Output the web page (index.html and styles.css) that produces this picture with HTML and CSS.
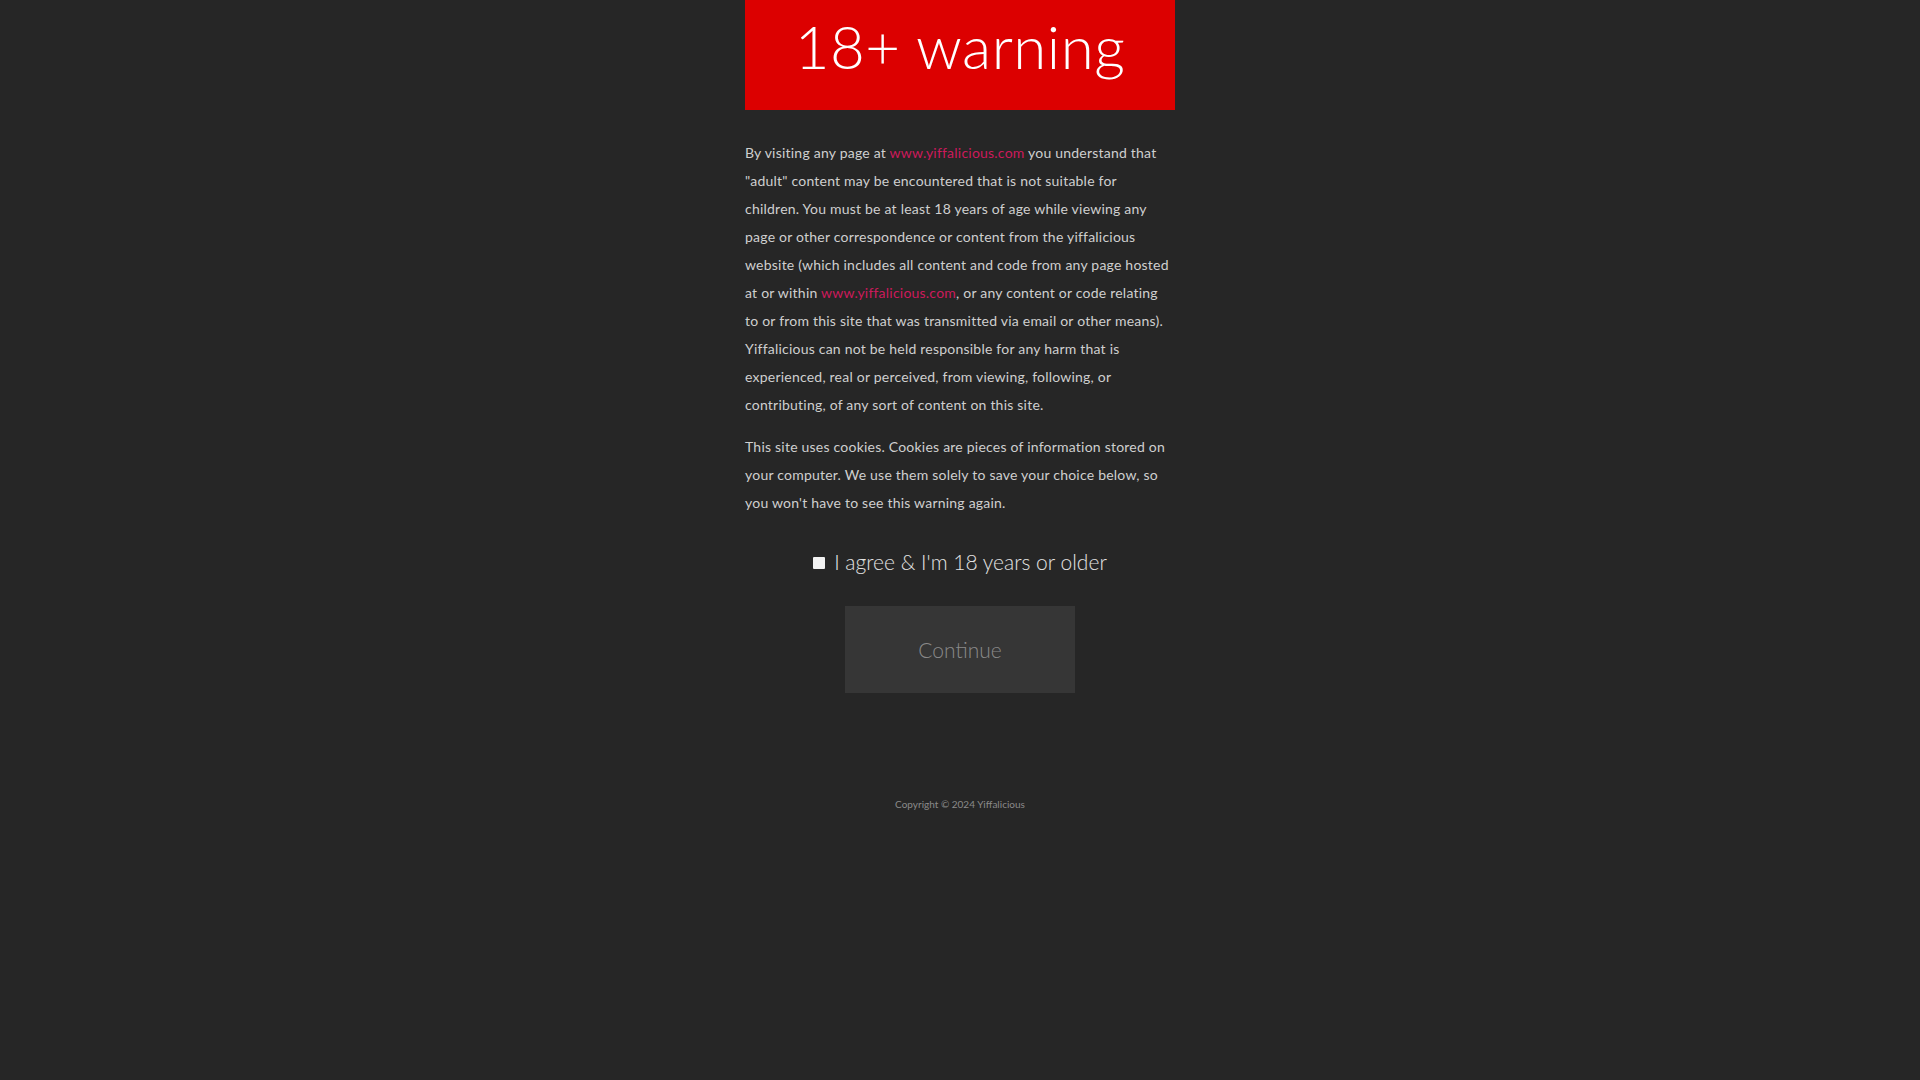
FILE: index.html
```html
<!DOCTYPE html>
<html lang="en">
<head>
  <meta charset="UTF-8">
  <meta name="viewport" content="width=device-width, initial-scale=1.0">
  <title>18+ warning</title>
  <link rel="stylesheet" href="styles.css">
</head>
<body>
  <div class="wrap">
    <div class="header">
      <h1>18+ warning</h1>
    </div>

    <div class="content">
      <p>By visiting any page at <a href="#">www.yiffalicious.com</a> you understand that "adult" content may be encountered that is not suitable for children. You must be at least 18 years of age while viewing any page or other correspondence or content from the yiffalicious website (which includes all content and code from any page hosted at or within <a href="#">www.yiffalicious.com</a>, or any content or code relating to or from this site that was transmitted via email or other means). Yiffalicious can not be held responsible for any harm that is experienced, real or perceived, from viewing, following, or contributing, of any sort of content on this site.</p>
      <p>This site uses cookies. Cookies are pieces of information stored on your computer. We use them solely to save your choice below, so you won't have to see this warning again.</p>
    </div>

    <div class="agree">
      <input type="checkbox" id="agree">
      <label for="agree">I agree &amp; I'm 18 years or older</label>
    </div>

    <div class="buttons">
      <button class="btn" id="continueBtn" disabled>Continue</button>
    </div>

    <div class="copyright">Copyright © 2024 Yiffalicious</div>
  </div>
</body>
</html>
```

FILE: styles.css
```css
* {
  box-sizing: border-box;
  margin: 0;
  padding: 0;
}

body {
  background: #262626;
  font-family: 'Lato', 'Open Sans', sans-serif;
  color: #cfcfcf;
}

.wrap {
  width: 430px;
  margin: 0 auto;
}

.header {
  background: #dc0000;
  height: 110px;
  display: flex;
  align-items: center;
  justify-content: center;
  padding-bottom: 18px;
}

.header h1 {
  font-size: 60px;
  font-weight: 300;
  color: white;
  letter-spacing: 0.5px;
}

.content {
  padding-top: 29px;
  padding-right: 2px;
}

.content p {
  font-size: 14px;
  line-height: 28px;
  letter-spacing: 0.22px;
  margin-bottom: 14px;
}

.content a {
  color: #cc1a5c;
  text-decoration: none;
}

.agree {
  display: flex;
  align-items: center;
  justify-content: center;
  gap: 9px;
  margin-top: 29px;
  height: 30px;
}

.agree input[type="checkbox"] {
  appearance: none;
  width: 12px;
  height: 12px;
  margin-top: 3px;
  background: #f2f2f2;
  border-radius: 1px;
}

.agree label {
  font-size: 21px;
  font-weight: 300;
  color: #e2e2e2;
}

.buttons {
  display: flex;
  justify-content: center;
  margin-top: 30px;
}

.btn {
  width: 230px;
  height: 87px;
  background: #363636;
  border: none;
  font-family: inherit;
  font-size: 21px;
  font-weight: 300;
  color: #8a8a8a;
}

.copyright {
  margin-top: 105px;
  text-align: center;
  font-size: 10px;
  color: #8a8a8a;
}
```
